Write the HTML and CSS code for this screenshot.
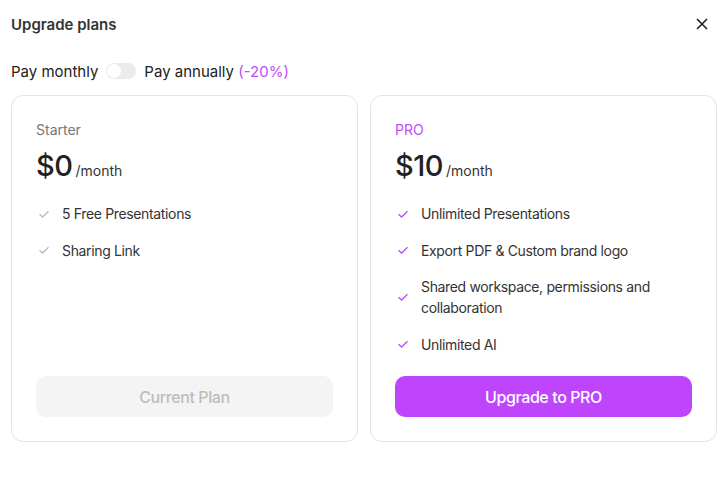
FILE: index.html
```html
<!DOCTYPE html>
<html lang="en">
  <head>
    <meta charset="UTF-8" />
    <meta name="viewport" content="width=device-width, initial-scale=1" />
    <title>Upgrade plans</title>
    <link rel="stylesheet" href="styles.css">
  </head>
  <body>
    <div class="dialog">
      <div class="header">
        <h2>Upgrade plans</h2>
        <button class="close" aria-label="Close">
          <svg width="12" height="12" viewBox="0 0 12 12"><path d="M1 1L11 11M11 1L1 11" stroke="#222" stroke-width="1.6" fill="none"/></svg>
        </button>
      </div>

      <div class="billing">
        <span>Pay monthly</span>
        <span class="toggle"><span class="knob"></span></span>
        <span>Pay annually <span class="discount">(-20%)</span></span>
      </div>

      <div class="plans">
        <div class="plan">
          <div class="plan-name">Starter</div>
          <div class="price"><span class="amount">$0</span> <span class="per">/month</span></div>
          <ul class="features muted">
            <li><svg viewBox="0 0 12 12"><path d="M1.5 6.2L4.6 9L10.5 3.2"/></svg><span>5 Free Presentations</span></li>
            <li><svg viewBox="0 0 12 12"><path d="M1.5 6.2L4.6 9L10.5 3.2"/></svg><span>Sharing Link</span></li>
          </ul>
          <button class="plan-btn current">Current Plan</button>
        </div>

        <div class="plan">
          <div class="plan-name pro">PRO</div>
          <div class="price"><span class="amount">$10</span> <span class="per">/month</span></div>
          <ul class="features">
            <li><svg viewBox="0 0 12 12"><path d="M1.5 6.2L4.6 9L10.5 3.2"/></svg><span>Unlimited Presentations</span></li>
            <li><svg viewBox="0 0 12 12"><path d="M1.5 6.2L4.6 9L10.5 3.2"/></svg><span>Export PDF &amp; Custom brand logo</span></li>
            <li><svg viewBox="0 0 12 12"><path d="M1.5 6.2L4.6 9L10.5 3.2"/></svg><span>Shared workspace, permissions and collaboration</span></li>
            <li><svg viewBox="0 0 12 12"><path d="M1.5 6.2L4.6 9L10.5 3.2"/></svg><span>Unlimited AI</span></li>
          </ul>
          <button class="plan-btn upgrade">Upgrade to PRO</button>
        </div>
      </div>
    </div>
  </body>
</html>
```

FILE: styles.css
```css
body {
  margin: 0;
  font-family: Inter, "Noto Sans", sans-serif;
  color: #222;
  background: #fff;
}
.dialog {
  padding: 13px 10px 0 11px;
}
.header {
  display: flex;
  justify-content: space-between;
  align-items: center;
  height: 22px;
}
.header h2 {
  margin: 0;
  font-size: 15px;
  font-weight: 600;
  color: #333;
}
.close {
  border: none;
  background: none;
  padding: 0;
  margin-right: 9px;
  display: flex;
  cursor: pointer;
}
.billing {
  display: flex;
  align-items: center;
  gap: 8px;
  margin-top: 25px;
  font-size: 15px;
  color: #222;
  height: 22px;
}
.discount {
  color: #c04cfd;
}
.toggle {
  width: 30px;
  height: 16px;
  border-radius: 8px;
  background: #ebebeb;
  display: flex;
  align-items: center;
  padding: 0 1px;
  box-sizing: border-box;
}
.knob {
  width: 14px;
  height: 14px;
  border-radius: 50%;
  background: #fff;
}
.plans {
  display: grid;
  grid-template-columns: 1fr 1fr;
  gap: 12px;
  margin-top: 13px;
}
.plan {
  border: 1px solid #e4e4e4;
  border-radius: 12px;
  height: 347px;
  box-sizing: border-box;
  padding: 25px 24px 24px 24px;
  display: flex;
  flex-direction: column;
}
.plan-name {
  font-size: 14px;
  color: #777;
  line-height: 18px;
}
.plan-name.pro {
  color: #c04cfd;
}
.price {
  margin-top: 7px;
  display: flex;
  align-items: baseline;
  gap: 3px;
  line-height: 40px;
}
.amount {
  font-size: 29px;
  font-weight: 450;
  color: #222;
  letter-spacing: -0.5px;
}
.per {
  font-size: 14px;
  color: #333;
}
.features {
  list-style: none;
  margin: 12px 0 0;
  padding: 0;
  flex: 1;
  display: flex;
  flex-direction: column;
  gap: 15.5px;
}
.features li {
  display: flex;
  align-items: center;
  gap: 12px;
  font-size: 14px;
  letter-spacing: -0.35px;
  line-height: 21px;
  color: #333;
  padding-left: 2px;
}
.features svg {
  width: 12px;
  height: 12px;
  flex: none;
  fill: none;
  stroke: #c04cfd;
  stroke-width: 1.4;
}
.features.muted svg {
  stroke: #bbb;
}
.plan-btn {
  height: 41px;
  border: none;
  border-radius: 10px;
  font-family: inherit;
  font-size: 16px;
  font-weight: 500;
  letter-spacing: -0.4px;
}
.plan-btn.current {
  background: #f4f4f4;
  color: #bdbdbd;
}
.plan-btn.upgrade {
  background: #bf45fc;
  color: #fff;
}
```
